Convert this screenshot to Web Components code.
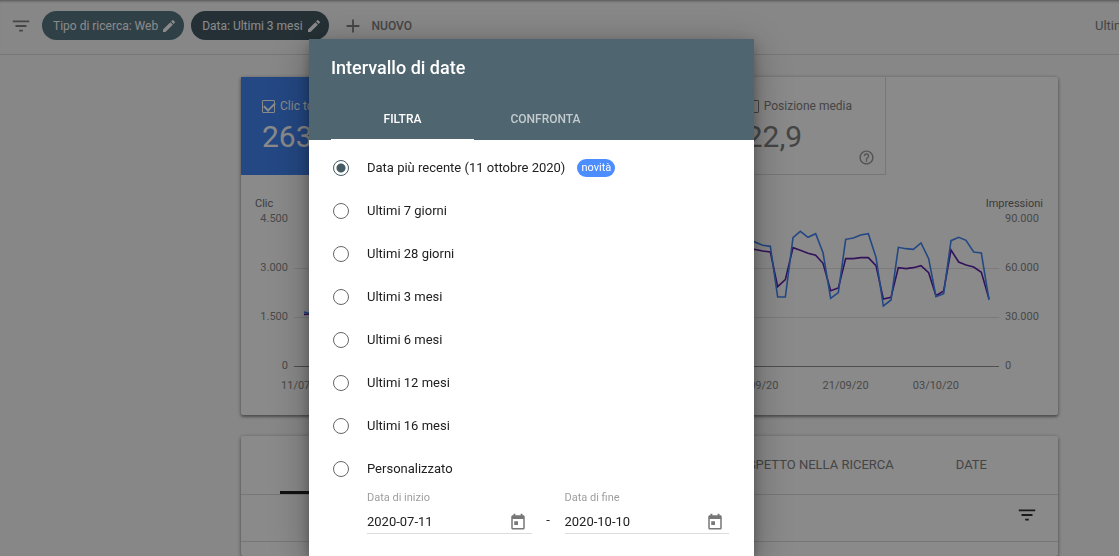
<!DOCTYPE html>
<html lang="it">
<head>
<meta charset="utf-8">
<meta name="viewport" content="width=device-width, initial-scale=1">
<title>Intervallo di date</title>
<style>
  html, body { margin: 0; height: 100%; }
  body { background: #fafafa; font: 13px/20px Roboto, "Liberation Sans", sans-serif; color: #212121; }
</style>
</head>
<body>
<search-console></search-console>
<script>
const define = (name, html, init) => {
  const template = document.createElement('template');
  template.innerHTML = '<style>*{box-sizing:border-box}button,input{font:inherit;color:inherit;margin:0;padding:0;border:0;background:none}a{color:inherit;text-decoration:none}</style>' + html;
  customElements.define(name, class extends HTMLElement {
    constructor() {
      super();
      this.attachShadow({ mode: 'open' }).append(template.content.cloneNode(true));
    }
    connectedCallback() { if (init) init(this, this.shadowRoot); }
  });
};

const ICONS = {
  filter: 'M10 18h4v-2h-4v2zM3 6v2h18V6H3zm3 7h12v-2H6v2z',
  edit: 'M3 17.25V21h3.75L17.81 9.94l-3.75-3.75L3 17.25zM20.71 7.04a1 1 0 0 0 0-1.41l-2.34-2.34a1 1 0 0 0-1.41 0l-1.83 1.83 3.75 3.75 1.83-1.83z',
  add: 'M19 13h-6v6h-2v-6H5v-2h6V5h2v6h6v2z',
  help: 'M11 18h2v-2h-2v2zm1-16C6.48 2 2 6.48 2 12s4.48 10 10 10 10-4.48 10-10S17.52 2 12 2zm0 18c-4.41 0-8-3.59-8-8s3.59-8 8-8 8 3.59 8 8-3.59 8-8 8zm0-14c-2.21 0-4 1.79-4 4h2c0-1.1.9-2 2-2s2 .9 2 2c0 2-3 1.75-3 5h2c0-2.25 3-2.5 3-5 0-2.21-1.79-4-4-4z',
  calendar: 'M19 3h-1V1h-2.500v2H8.500V1H6v2H5c-1.110 0-2 .9-2 2v15c0 1.100.890 2 2 2h14c1.100 0 2-.9 2-2V5c0-1.100-.9-2-2-2zm0 17H5V8h14v12zM7 11h5v5H7z'
};

define('app-icon', `
  <style>:host{display:block;flex:none;width:var(--size,22px);height:var(--size,22px)}svg{display:block;width:100%;height:100%;fill:currentColor}</style>
  <svg viewBox="0 0 24 24" aria-hidden="true"><path/></svg>`,
  (el, root) => root.querySelector('path').setAttribute('d', ICONS[el.getAttribute('name')]));

define('filter-chip', `
  <style>
    :host{display:block}
    button{display:flex;align-items:center;gap:3px;height:29px;padding:0 7px 0 11px;border-radius:15px;background:var(--chip,#587683);color:#fff;font-size:12px;white-space:nowrap}
    app-icon{--size:16px}
  </style>
  <button type="button"><slot></slot><app-icon name="edit"></app-icon></button>`);

define('top-bar', `
  <style>
    :host{display:flex;align-items:center;height:55px;padding:0 0 3px 10px;border-bottom:1px solid #dcdcdc;box-shadow:inset 0 3px 3px -2px #0006;overflow:hidden;white-space:nowrap}
    app-icon{color:#808080}
    filter-chip{margin-left:10px}
    filter-chip + filter-chip{margin-left:7px;--chip:#455a64}
    .new{display:flex;align-items:center;gap:8px;margin-left:13px;font-weight:500;font-size:12px;color:#808080}
    .updated{margin-left:auto;width:24px;color:#808080}
  </style>
  <app-icon name="filter"></app-icon>
  <filter-chip>Tipo di ricerca: Web</filter-chip>
  <filter-chip>Data: Ultimi 3 mesi</filter-chip>
  <button class="new" type="button"><app-icon name="add"></app-icon>NUOVO</button>
  <span class="updated">Ultimo</span>`);

define('metric-tile', `
  <style>
    :host{display:flex;flex-direction:column;position:relative;height:98px;padding:19px 0 0 21px;border:solid #dcdcdc;border-width:0 1px 1px 0;color:#808080;white-space:nowrap;overflow:hidden}
    :host([selected]){background:#4285f4;border-color:#4285f4;color:#fff}
    label{display:flex;align-items:center;gap:5px;font-size:12px}
    input{appearance:none;width:13px;height:13px;border:1px solid currentColor;border-radius:1px;display:grid}
    input:checked::before{content:"";width:9px;height:5px;margin:1px;border:solid currentColor;border-width:0 0 2px 2px;transform:rotate(-45deg)}
    .value{font-size:30px;line-height:42px}
    app-icon{--size:17px;position:absolute;right:10px;bottom:8px;color:#999}
    :host([selected]) app-icon{display:none}
  </style>
  <label><input type="checkbox"><slot name="label"></slot></label>
  <div class="value"><slot></slot></div>
  <app-icon name="help"></app-icon>`,
  (el, root) => { root.querySelector('input').checked = el.hasAttribute('selected'); });

define('trend-chart', `
  <style>
    :host{display:block;font-size:11px;color:#888;padding:19px 0 19px}
    .head{display:flex;justify-content:space-between;padding:0 15px 0 14px;line-height:20px;color:#707070}
    .body{display:grid;grid-template-columns:53px 1fr 59px;height:149px;margin-top:4px}
    .axis{display:grid;grid-template-rows:repeat(3,49px) 0;line-height:2px;text-align:right;padding-right:6px}
    .axis.right{text-align:left;padding:0 0 0 6px}
    svg{display:block;width:100%;height:100%}
    svg *{vector-effect:non-scaling-stroke;fill:none}
    .days{display:grid;grid-template-columns:repeat(8,1fr);margin:9px 77px 0 18px;text-align:center}
    .days :nth-child(2){grid-column:6}
  </style>
  <div class="head"><span>Clic</span><span>Impressioni</span></div>
  <div class="body">
    <div class="axis"><span>4.500</span><span>3.000</span><span>1.500</span><span>0</span></div>
    <svg viewBox="-1338 84 2115 447" preserveAspectRatio="none" role="img" aria-label="Clic e impressioni nel tempo">
      <path stroke="#e4e4e4" d="M-1338 235.500H777M-1338 382.500H777"/>
      <path stroke="#909090" d="M-1338 529.500H777"/>
      <path stroke="#5e20a8" stroke-width="1.600" d="M-1308 373L-1285 372L-1262 300L-1150 300L-1128 380L-1105 380L-800 250L-500 330L-200 190L42 178L68 183L91 186L113 290L136 269L159 173L181 181L204 190L227 196L249 220L272 302L295 294L317 206L340 206L362 203L385 203L408 227L430 327L453 322L475 233L498 236L520 233L543 227L566 248L588 317L611 303L633 180L656 216L678 225L701 231L724 247L747 326"/>
      <path stroke="#4285f4" stroke-width="1.600" d="M-1308 366L-1285 372L-1262 290L-1150 290L-1128 390L-1105 390L-800 240L-500 340L-200 170L42 155L68 166L91 169L113 321L136 321L159 143L181 124L204 142L227 131L249 188L272 325L295 308L317 148L340 144L362 135L385 131L408 202L430 348L453 330L475 172L498 176L520 178L543 159L566 206L588 320L611 311L633 152L656 142L678 151L701 186L724 189L747 330"/>
    </svg>
    <div class="axis right"><span>90.000</span><span>60.000</span><span>30.000</span><span>0</span></div>
  </div>
  <div class="days"><span>11/07/20</span><span>09/09/20</span><span>21/09/20</span><span>03/10/20</span></div>`);

define('paper-card', `
  <style>:host{display:block;background:#fff;border-radius:2px;box-shadow:0 1px 4px #0006,0 2px 2px #0003}</style><slot></slot>`);

define('dimension-tabs', `
  <style>
    nav{display:flex;height:59px;padding:0 40px 0 39px;border-bottom:1px solid #dcdcdc;color:#808080;white-space:nowrap}
    a{padding:0 31px;line-height:58px}
    a[aria-current]{border-bottom:3px solid #212121;margin-right:auto}
    .tools{display:flex;align-items:center;justify-content:flex-end;height:47px;padding:0 20px 7px 0;border-bottom:1px solid #dcdcdc}
    .tools button{display:block;color:#333}
  </style>
  <nav><a href="#query" aria-current="page">QUERY</a><a href="#aspetto">ASPETTO NELLA RICERCA</a><a href="#date">DATE</a></nav>
  <div class="tools"><button type="button" aria-label="Filtra righe"><app-icon name="filter"></app-icon></button></div>`);

define('date-field', `
  <style>
    :host{display:block}
    label{display:block;font-size:11px;line-height:16px;color:#9e9e9e}
    .box{display:flex;align-items:center;height:28px;padding:5px 5px 0 0;border-bottom:1px solid #dcdcdc}
    input{flex:1;min-width:0;outline:0}
    button{color:#777}
    app-icon{--size:18px}
  </style>
  <label for="date"><slot></slot></label>
  <div class="box"><input id="date" type="text"><button type="button" aria-label="Apri calendario"><app-icon name="calendar"></app-icon></button></div>`,
  (el, root) => { root.querySelector('input').value = el.getAttribute('value'); });

define('date-dialog', `
  <style>
    :host{display:block;width:445px;background:#fff;overflow:hidden;box-shadow:0 11px 15px -7px #0003,0 10px 38px 3px #0004,0 4px 12px #0004}
    header{background:#4f656f;color:#fff;padding:17px 22px 0}
    h1{margin:0;font-size:18px;line-height:24px;font-weight:500}
    [role=tablist]{display:flex;margin-top:18px}
    [role=tab]{width:143px;height:42px;border-bottom:1px solid transparent;font-size:12px;font-weight:500;color:#c3cbcf}
    [aria-selected=true]{border-color:#fff;color:#fff}
    form{padding:6px 25px 0 24px}
    .option{display:flex;align-items:center;height:43px}
    .option input{appearance:none;width:16px;height:16px;margin-right:18px;border:1px solid #666;border-radius:50%}
    .option input:checked{border-color:#455a64;background:radial-gradient(circle,#455a64 4px,#fff 5px)}
    .badge{margin-left:12px;padding:0 4px;border-radius:9px;background:#4c8dff;color:#fff;font-size:11px;line-height:18px}
    .range{display:grid;grid-template-columns:minmax(0,1fr) 33px minmax(0,1fr);padding-left:34px}
    .range > span{text-align:center;padding-top:20px}
  </style>
  <header>
    <h1>Intervallo di date</h1>
    <div role="tablist"><button role="tab" type="button" aria-selected="true">FILTRA</button><button role="tab" type="button" aria-selected="false">CONFRONTA</button></div>
  </header>
  <form>
    <label class="option"><input type="radio" name="range" checked>Data più recente (11 ottobre 2020)<span class="badge">novità</span></label>
    <label class="option"><input type="radio" name="range">Ultimi 7 giorni</label>
    <label class="option"><input type="radio" name="range">Ultimi 28 giorni</label>
    <label class="option"><input type="radio" name="range">Ultimi 3 mesi</label>
    <label class="option"><input type="radio" name="range">Ultimi 6 mesi</label>
    <label class="option"><input type="radio" name="range">Ultimi 12 mesi</label>
    <label class="option"><input type="radio" name="range">Ultimi 16 mesi</label>
    <label class="option"><input type="radio" name="range">Personalizzato</label>
    <div class="range"><date-field value="2020-07-11">Data di inizio</date-field><span>-</span><date-field value="2020-10-10">Data di fine</date-field></div>
  </form>`);

define('search-console', `
  <style>
    :host{display:flex;flex-direction:column;min-height:100%}
    main{flex:1;display:grid;grid-template-rows:auto 1fr;gap:21px;padding:22px 61px 0 241px}
    .metrics{display:grid;grid-template-columns:repeat(4,1fr);max-width:645px}
    .metrics :last-child{grid-column:4}
    .overlay{position:fixed;inset:0;display:flex;justify-content:center;padding:39px 56px 0 0;background:#00000075}
  </style>
  <top-bar></top-bar>
  <main>
    <paper-card>
      <div class="metrics">
        <metric-tile selected><span slot="label">Clic totali</span>263</metric-tile>
        <metric-tile><span slot="label">Posizione media</span>22,9</metric-tile>
      </div>
      <trend-chart></trend-chart>
    </paper-card>
    <paper-card><dimension-tabs></dimension-tabs></paper-card>
  </main>
  <div class="overlay"><date-dialog role="dialog" aria-modal="true" aria-label="Intervallo di date"></date-dialog></div>`);
</script>
</body>
</html>
